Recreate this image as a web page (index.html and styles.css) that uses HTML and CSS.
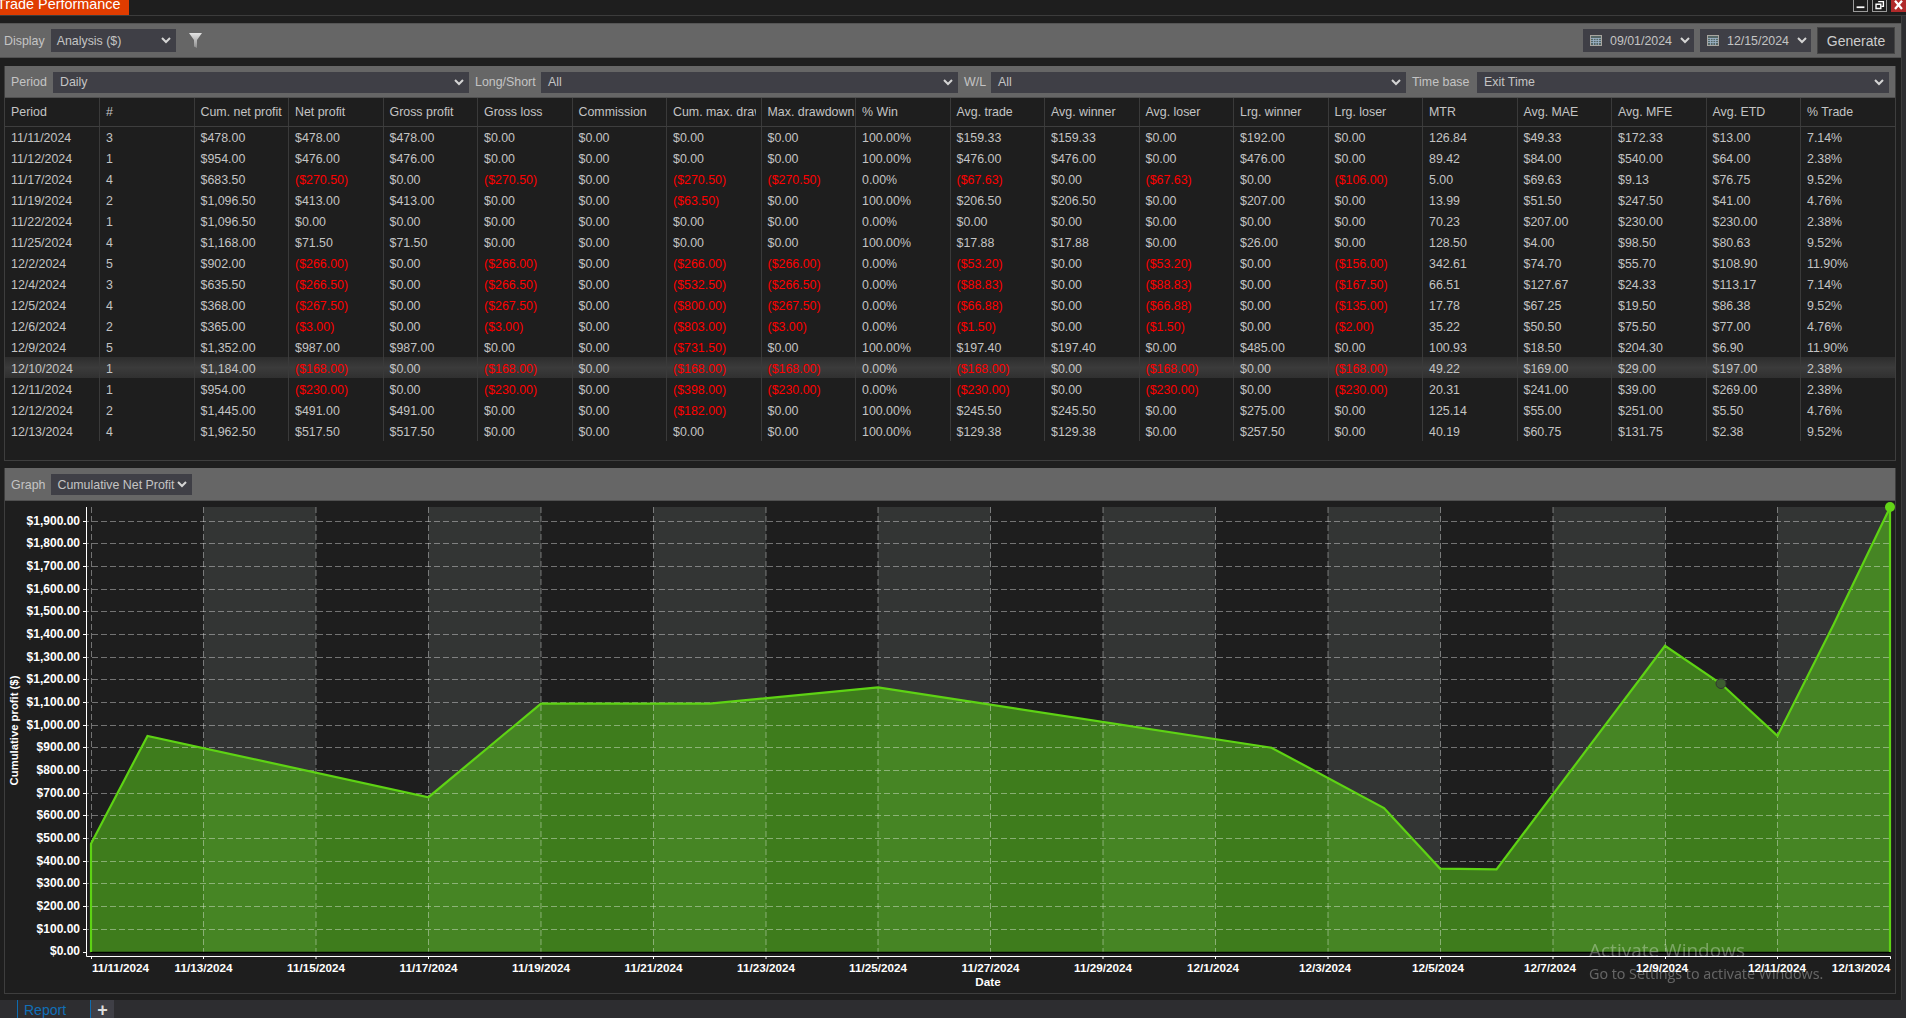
FILE: index.html
```html
<!DOCTYPE html>
<html lang="en">

<head>
    <meta charset="UTF-8">
    <meta name="viewport" content="width=device-width, initial-scale=1.0">
    <title>Trade Performance</title>
    <link rel="stylesheet" href="styles.css">
</head>

<body>
    <div class="titlebar">
        <div class="titleTab"><span>Trade Performance</span></div>
        <div class="winButtons">
            <div class="winBtn"><svg viewBox="0 0 15 11"><path d="M3 7.5h9" stroke="#fff" stroke-width="2"/></svg></div>
            <div class="winBtn"><svg viewBox="0 0 15 11"><path d="M6 1h6v5.5h-2M3.5 4h5.500v5h-5.500z" stroke="#fff" stroke-width="1.6" fill="none"/></svg></div>
            <div class="winBtn closeBtn"><svg viewBox="0 0 15 11"><path d="M3.5 0l8 9.5M11.5 0l-8 9.5" stroke="#fff" stroke-width="2.6"/></svg></div>
        </div>
    </div>

    <div class="workspace">
        <div class="toolbar">
            <span class="label">Display</span>
            <div class="select displaySelect">Analysis ($)<svg class="chev" viewBox="0 0 10 7"><path d="M1 1l4 4 4-4"/></svg></div>
            <svg class="funnel" viewBox="0 0 13 15">
                <defs><linearGradient id="funnelFill" x1="0" y1="0" x2="0" y2="1"><stop offset="0" stop-color="#e4e4e4"/><stop offset="1" stop-color="#8c8c8c"/></linearGradient></defs>
                <path d="M0 0h13l-5 7v8l-3-1.5v-6.5z" fill="url(#funnelFill)"/>
            </svg>
            <div class="toolbarRight">
                <div class="select dateSelect">
                    <svg class="calendar" viewBox="0 0 12 11"><rect x="0.5" y="0.5" width="11" height="10" fill="#566" stroke="#a9a6a0"/><path d="M1 3.5h10M1 5.5h10M1 7.5h10M3.5 3v7M6 3v7M8.5 3v7" stroke="#9db4c8" stroke-width="0.8"/></svg>
                    09/01/2024<svg class="chev" viewBox="0 0 10 7"><path d="M1 1l4 4 4-4"/></svg>
                </div>
                <div class="select dateSelect">
                    <svg class="calendar" viewBox="0 0 12 11"><rect x="0.5" y="0.5" width="11" height="10" fill="#566" stroke="#a9a6a0"/><path d="M1 3.5h10M1 5.5h10M1 7.5h10M3.5 3v7M6 3v7M8.5 3v7" stroke="#9db4c8" stroke-width="0.8"/></svg>
                    12/15/2024<svg class="chev" viewBox="0 0 10 7"><path d="M1 1l4 4 4-4"/></svg>
                </div>
                <button class="generate">Generate</button>
            </div>
        </div>

        <div class="panel tablePanel">
            <div class="panelHead filters">
                <span class="label">Period</span>
                <div class="select">Daily<svg class="chev" viewBox="0 0 10 7"><path d="M1 1l4 4 4-4"/></svg></div>
                <span class="label">Long/Short</span>
                <div class="select">All<svg class="chev" viewBox="0 0 10 7"><path d="M1 1l4 4 4-4"/></svg></div>
                <span class="label">W/L</span>
                <div class="select">All<svg class="chev" viewBox="0 0 10 7"><path d="M1 1l4 4 4-4"/></svg></div>
                <span class="label">Time base</span>
                <div class="select">Exit Time<svg class="chev" viewBox="0 0 10 7"><path d="M1 1l4 4 4-4"/></svg></div>
            </div>
            <table class="perf">
                <thead>
                    <tr><th>Period</th><th>#</th><th>Cum. net profit</th><th>Net profit</th><th>Gross profit</th><th>Gross loss</th><th>Commission</th><th><span class="cut">Cum. max. drawdown</span></th><th>Max. drawdown</th><th>% Win</th><th>Avg. trade</th><th>Avg. winner</th><th>Avg. loser</th><th>Lrg. winner</th><th>Lrg. loser</th><th>MTR</th><th>Avg. MAE</th><th>Avg. MFE</th><th>Avg. ETD</th><th>% Trade</th></tr>
                </thead>
                <tbody>
                    <tr><td>11/11/2024</td><td>3</td><td>$478.00</td><td>$478.00</td><td>$478.00</td><td>$0.00</td><td>$0.00</td><td>$0.00</td><td>$0.00</td><td>100.00%</td><td>$159.33</td><td>$159.33</td><td>$0.00</td><td>$192.00</td><td>$0.00</td><td>126.84</td><td>$49.33</td><td>$172.33</td><td>$13.00</td><td>7.14%</td></tr>
                    <tr><td>11/12/2024</td><td>1</td><td>$954.00</td><td>$476.00</td><td>$476.00</td><td>$0.00</td><td>$0.00</td><td>$0.00</td><td>$0.00</td><td>100.00%</td><td>$476.00</td><td>$476.00</td><td>$0.00</td><td>$476.00</td><td>$0.00</td><td>89.42</td><td>$84.00</td><td>$540.00</td><td>$64.00</td><td>2.38%</td></tr>
                    <tr><td>11/17/2024</td><td>4</td><td>$683.50</td><td class="neg">($270.50)</td><td>$0.00</td><td class="neg">($270.50)</td><td>$0.00</td><td class="neg">($270.50)</td><td class="neg">($270.50)</td><td>0.00%</td><td class="neg">($67.63)</td><td>$0.00</td><td class="neg">($67.63)</td><td>$0.00</td><td class="neg">($106.00)</td><td>5.00</td><td>$69.63</td><td>$9.13</td><td>$76.75</td><td>9.52%</td></tr>
                    <tr><td>11/19/2024</td><td>2</td><td>$1,096.50</td><td>$413.00</td><td>$413.00</td><td>$0.00</td><td>$0.00</td><td class="neg">($63.50)</td><td>$0.00</td><td>100.00%</td><td>$206.50</td><td>$206.50</td><td>$0.00</td><td>$207.00</td><td>$0.00</td><td>13.99</td><td>$51.50</td><td>$247.50</td><td>$41.00</td><td>4.76%</td></tr>
                    <tr><td>11/22/2024</td><td>1</td><td>$1,096.50</td><td>$0.00</td><td>$0.00</td><td>$0.00</td><td>$0.00</td><td>$0.00</td><td>$0.00</td><td>0.00%</td><td>$0.00</td><td>$0.00</td><td>$0.00</td><td>$0.00</td><td>$0.00</td><td>70.23</td><td>$207.00</td><td>$230.00</td><td>$230.00</td><td>2.38%</td></tr>
                    <tr><td>11/25/2024</td><td>4</td><td>$1,168.00</td><td>$71.50</td><td>$71.50</td><td>$0.00</td><td>$0.00</td><td>$0.00</td><td>$0.00</td><td>100.00%</td><td>$17.88</td><td>$17.88</td><td>$0.00</td><td>$26.00</td><td>$0.00</td><td>128.50</td><td>$4.00</td><td>$98.50</td><td>$80.63</td><td>9.52%</td></tr>
                    <tr><td>12/2/2024</td><td>5</td><td>$902.00</td><td class="neg">($266.00)</td><td>$0.00</td><td class="neg">($266.00)</td><td>$0.00</td><td class="neg">($266.00)</td><td class="neg">($266.00)</td><td>0.00%</td><td class="neg">($53.20)</td><td>$0.00</td><td class="neg">($53.20)</td><td>$0.00</td><td class="neg">($156.00)</td><td>342.61</td><td>$74.70</td><td>$55.70</td><td>$108.90</td><td>11.90%</td></tr>
                    <tr><td>12/4/2024</td><td>3</td><td>$635.50</td><td class="neg">($266.50)</td><td>$0.00</td><td class="neg">($266.50)</td><td>$0.00</td><td class="neg">($532.50)</td><td class="neg">($266.50)</td><td>0.00%</td><td class="neg">($88.83)</td><td>$0.00</td><td class="neg">($88.83)</td><td>$0.00</td><td class="neg">($167.50)</td><td>66.51</td><td>$127.67</td><td>$24.33</td><td>$113.17</td><td>7.14%</td></tr>
                    <tr><td>12/5/2024</td><td>4</td><td>$368.00</td><td class="neg">($267.50)</td><td>$0.00</td><td class="neg">($267.50)</td><td>$0.00</td><td class="neg">($800.00)</td><td class="neg">($267.50)</td><td>0.00%</td><td class="neg">($66.88)</td><td>$0.00</td><td class="neg">($66.88)</td><td>$0.00</td><td class="neg">($135.00)</td><td>17.78</td><td>$67.25</td><td>$19.50</td><td>$86.38</td><td>9.52%</td></tr>
                    <tr><td>12/6/2024</td><td>2</td><td>$365.00</td><td class="neg">($3.00)</td><td>$0.00</td><td class="neg">($3.00)</td><td>$0.00</td><td class="neg">($803.00)</td><td class="neg">($3.00)</td><td>0.00%</td><td class="neg">($1.50)</td><td>$0.00</td><td class="neg">($1.50)</td><td>$0.00</td><td class="neg">($2.00)</td><td>35.22</td><td>$50.50</td><td>$75.50</td><td>$77.00</td><td>4.76%</td></tr>
                    <tr><td>12/9/2024</td><td>5</td><td>$1,352.00</td><td>$987.00</td><td>$987.00</td><td>$0.00</td><td>$0.00</td><td class="neg">($731.50)</td><td>$0.00</td><td>100.00%</td><td>$197.40</td><td>$197.40</td><td>$0.00</td><td>$485.00</td><td>$0.00</td><td>100.93</td><td>$18.50</td><td>$204.30</td><td>$6.90</td><td>11.90%</td></tr>
                    <tr class="selected"><td>12/10/2024</td><td>1</td><td>$1,184.00</td><td class="neg">($168.00)</td><td>$0.00</td><td class="neg">($168.00)</td><td>$0.00</td><td class="neg">($168.00)</td><td class="neg">($168.00)</td><td>0.00%</td><td class="neg">($168.00)</td><td>$0.00</td><td class="neg">($168.00)</td><td>$0.00</td><td class="neg">($168.00)</td><td>49.22</td><td>$169.00</td><td>$29.00</td><td>$197.00</td><td>2.38%</td></tr>
                    <tr><td>12/11/2024</td><td>1</td><td>$954.00</td><td class="neg">($230.00)</td><td>$0.00</td><td class="neg">($230.00)</td><td>$0.00</td><td class="neg">($398.00)</td><td class="neg">($230.00)</td><td>0.00%</td><td class="neg">($230.00)</td><td>$0.00</td><td class="neg">($230.00)</td><td>$0.00</td><td class="neg">($230.00)</td><td>20.31</td><td>$241.00</td><td>$39.00</td><td>$269.00</td><td>2.38%</td></tr>
                    <tr><td>12/12/2024</td><td>2</td><td>$1,445.00</td><td>$491.00</td><td>$491.00</td><td>$0.00</td><td>$0.00</td><td class="neg">($182.00)</td><td>$0.00</td><td>100.00%</td><td>$245.50</td><td>$245.50</td><td>$0.00</td><td>$275.00</td><td>$0.00</td><td>125.14</td><td>$55.00</td><td>$251.00</td><td>$5.50</td><td>4.76%</td></tr>
                    <tr><td>12/13/2024</td><td>4</td><td>$1,962.50</td><td>$517.50</td><td>$517.50</td><td>$0.00</td><td>$0.00</td><td>$0.00</td><td>$0.00</td><td>100.00%</td><td>$129.38</td><td>$129.38</td><td>$0.00</td><td>$257.50</td><td>$0.00</td><td>40.19</td><td>$60.75</td><td>$131.75</td><td>$2.38</td><td>9.52%</td></tr>
                </tbody>
            </table>
        </div>

        <div class="panel graphPanel">
            <div class="panelHead graphHead">
                <span class="label">Graph</span>
                <div class="select graphSelect">Cumulative Net Profit<svg class="chev" viewBox="0 0 10 7"><path d="M1 1l4 4 4-4"/></svg></div>
            </div>
            <svg class="chart" width="1890" height="492" viewBox="5 501 1890 492">
                <!-- shaded date bands -->
                <g class="bands">
                    <rect x="203.5" y="507" width="112.5" height="445"/>
                    <rect x="428.5" y="507" width="112.5" height="445"/>
                    <rect x="653.5" y="507" width="112.5" height="445"/>
                    <rect x="878" y="507" width="112.5" height="445"/>
                    <rect x="1103" y="507" width="112.5" height="445"/>
                    <rect x="1328" y="507" width="112.5" height="445"/>
                    <rect x="1553" y="507" width="112.5" height="445"/>
                    <rect x="1777.5" y="507" width="112.5" height="445"/>
                </g>
                <polygon class="area" points="91,952 91,843.7 147.5,735.9 428.5,797.2 541,703.6 709.5,703.6 878,687.4 1271.5,747.7 1384,808.1 1440,868.6 1496.5,869.3 1665,645.8 1721,683.8 1777.5,735.9 1833.5,624.7 1890,507.5 1890,952"/>
                <!-- dashed grid -->
                <path class="grid" d="M83 521.5H1890M83 543.5H1890M83 566.5H1890M83 589.5H1890M83 611.5H1890M83 634.5H1890M83 657.5H1890M83 679.5H1890M83 702.5H1890M83 725.5H1890M83 747.5H1890M83 770.5H1890M83 793.5H1890M83 815.5H1890M83 838.5H1890M83 861.5H1890M83 883.5H1890M83 906.5H1890M83 929.5H1890"/>
                <path class="grid" d="M91.5 507V952M203.5 507V952M316 507V952M428.5 507V952M541 507V952M653.5 507V952M766 507V952M878 507V952M990.5 507V952M1103 507V952M1215.5 507V952M1328 507V952M1440.5 507V952M1553 507V952M1665.5 507V952M1777.5 507V952"/>
                <path class="baseline" d="M91 952.5H1890"/>
                <polyline class="profit" points="91,952 91,843.7 147.5,735.9 428.5,797.2 541,703.6 709.5,703.6 878,687.4 1271.5,747.7 1384,808.1 1440,868.6 1496.5,869.3 1665,645.8 1721,683.8 1777.5,735.9 1833.5,624.7 1890,507.5 1890,952"/>
                <circle class="endDot" cx="1890" cy="507" r="5"/>
                <circle class="hoverDot" cx="1721" cy="683.5" r="5"/>
                <!-- axes -->
                <path class="axis" d="M86.5 507V956.5H1890.5V959M91.5 956.5V959M203.5 956.5V959M316 956.5V959M428.5 956.5V959M541 956.5V959M653.5 956.5V959M766 956.5V959M878 956.5V959M990.5 956.5V959M1103 956.5V959M1215.5 956.5V959M1328 956.5V959M1440.5 956.5V959M1553 956.5V959M1665.5 956.5V959M1777.5 956.5V959"/>
                <path class="axis" d="M83 521.5H86M83 543.5H86M83 566.5H86M83 589.5H86M83 611.5H86M83 634.5H86M83 657.5H86M83 679.5H86M83 702.5H86M83 725.5H86M83 747.5H86M83 770.5H86M83 793.5H86M83 815.5H86M83 838.5H86M83 861.5H86M83 883.5H86M83 906.5H86M83 929.5H86M83 952.5H86"/>
                <g class="yLabels">
                    <text x="80" y="524.5">$1,900.00</text>
                    <text x="80" y="546.5">$1,800.00</text>
                    <text x="80" y="569.5">$1,700.00</text>
                    <text x="80" y="592.5">$1,600.00</text>
                    <text x="80" y="614.5">$1,500.00</text>
                    <text x="80" y="637.5">$1,400.00</text>
                    <text x="80" y="660.5">$1,300.00</text>
                    <text x="80" y="682.5">$1,200.00</text>
                    <text x="80" y="705.5">$1,100.00</text>
                    <text x="80" y="728.5">$1,000.00</text>
                    <text x="80" y="750.5">$900.00</text>
                    <text x="80" y="773.5">$800.00</text>
                    <text x="80" y="796.5">$700.00</text>
                    <text x="80" y="818.5">$600.00</text>
                    <text x="80" y="841.5">$500.00</text>
                    <text x="80" y="864.5">$400.00</text>
                    <text x="80" y="886.5">$300.00</text>
                    <text x="80" y="909.5">$200.00</text>
                    <text x="80" y="932.5">$100.00</text>
                    <text x="80" y="955">$0.00</text>
                </g>
                <g class="xLabels">
                    <text x="120.5" y="972">11/11/2024</text>
                    <text x="203.5" y="972">11/13/2024</text>
                    <text x="316" y="972">11/15/2024</text>
                    <text x="428.5" y="972">11/17/2024</text>
                    <text x="541" y="972">11/19/2024</text>
                    <text x="653.5" y="972">11/21/2024</text>
                    <text x="766" y="972">11/23/2024</text>
                    <text x="878" y="972">11/25/2024</text>
                    <text x="990.5" y="972">11/27/2024</text>
                    <text x="1103" y="972">11/29/2024</text>
                    <text x="1213" y="972">12/1/2024</text>
                    <text x="1325" y="972">12/3/2024</text>
                    <text x="1438" y="972">12/5/2024</text>
                    <text x="1550" y="972">12/7/2024</text>
                    <text x="1662" y="972">12/9/2024</text>
                    <text x="1777" y="972">12/11/2024</text>
                    <text x="1861" y="972">12/13/2024</text>
                    <text x="988" y="986">Date</text>
                </g>
                <text class="yTitle" transform="translate(18 730.5) rotate(-90)">Cumulative profit ($)</text>
            </svg>
        </div>
    </div>

    <div class="tabBar">
        <div class="tab">Report</div>
        <div class="addTab">+</div>
    </div>

    <div class="watermark">
        <div class="wmTitle">Activate Windows</div>
        <div class="wmText">Go to Settings to activate Windows.</div>
    </div>
</body>

</html>
```

FILE: styles.css
```css
* {
    margin: 0;
    padding: 0;
    box-sizing: border-box;
}

body {
    width: 1906px;
    height: 1018px;
    overflow: hidden;
    background: #2d2d30;
    font-family: "Liberation Sans", Arial, sans-serif;
    font-size: 12.4px;
    color: #c4c4c4;
}

/* Title strip */
.titlebar {
    display: flex;
    justify-content: space-between;
    height: 16px;
    background: #1e1e1e;
    border-bottom: 1px solid #3c3c3c;
}

.titleTab {
    width: 129px;
    height: 15px;
    background: #e03c00;
    color: #fff;
    font-size: 14.4px;
    line-height: 8px;
    overflow: hidden;
}

.titleTab span {
    display: block;
    margin-left: -3px;
    white-space: nowrap;
}

.winButtons {
    display: flex;
    gap: 4px;
}

.winBtn {
    width: 15px;
    height: 12px;
    border: 1px solid #9a9a9a;
    border-top: none;
}

.winBtn svg {
    display: block;
    width: 100%;
    height: 100%;
}

.closeBtn {
    background: #b02a2a;
    border-color: #b02a2a;
}

/* Main area */
.workspace {
    width: 1902px;
    height: 984px;
    background: #1e1e1e;
    border-right: 1px solid #3c3c3c;
    padding-top: 7px;
}

.toolbar {
    display: flex;
    align-items: center;
    height: 35px;
    padding: 0 6px 0 4px;
    background: #666;
    border-top: 1px solid #555;
    border-bottom: 1px solid #505050;
}

.toolbarRight {
    display: flex;
    align-items: center;
    gap: 6px;
    margin-left: auto;
}

.label {
    flex: none;
    white-space: nowrap;
}

.toolbar > .label {
    margin-right: 6px;
}

.select {
    display: flex;
    align-items: center;
    justify-content: space-between;
    height: 21px;
    padding: 0 5px 0 7px;
    background: #3f3f46;
    white-space: nowrap;
}

.chev {
    flex: none;
    width: 10px;
    height: 7px;
    fill: none;
    stroke: #d4d4d4;
    stroke-width: 2;
}

.displaySelect {
    width: 125px;
    height: 23px;
    padding-left: 6px;
}

.funnel {
    width: 13px;
    height: 15px;
    margin-left: 13px;
}

.dateSelect {
    width: 111px;
    height: 23px;
    padding-right: 4px;
}

.calendar {
    flex: none;
    width: 12px;
    height: 11px;
}

.generate {
    width: 78px;
    height: 27px;
    background: #2d2d30;
    border: 1px solid #444;
    color: #ccc;
    font-family: "Liberation Sans", Arial, sans-serif;
    font-size: 14px;
}

/* Panels */
.panel {
    width: 1892px;
    margin-left: 4px;
    border: 1px solid #3e3e3e;
    border-top: none;
}

.tablePanel {
    height: 395px;
    margin-top: 8px;
}

.graphPanel {
    height: 526px;
    margin-top: 7px;
}

.panelHead {
    display: flex;
    align-items: center;
    gap: 6px;
    height: 32px;
    padding: 1px 6px 0;
    background: #666;
    border-bottom: 1px solid #505050;
}

.graphHead {
    height: 33px;
}

.graphSelect {
    width: 141px;
    padding-left: 6px;
}

/* filter row, widths read off the screenshot */
.filters .label:nth-child(1) { width: 36px; }
.filters .label:nth-child(3) { width: 60px; }
.filters .label:nth-child(5) { width: 21px; }
.filters .label:nth-child(7) { width: 59px; }
.filters .select:nth-child(2) { width: 416px; }
.filters .select:nth-child(4) { width: 417px; }
.filters .select:nth-child(6) { width: 415px; }
.filters .select:nth-child(8) { flex: 1; }

/* Table */
.perf {
    width: 1890px;
    table-layout: fixed;
    border-collapse: collapse;
}

.perf th {
    height: 28px;
    padding: 1px 0 0 6px;
    font-weight: normal;
    text-align: left;
    white-space: nowrap;
    overflow: hidden;
    border-right: 1px solid #3a3a3a;
    border-bottom: 1px solid #3e3e3e;
}

.cut {
    display: block;
    overflow: hidden;
    width: 83px;
}

.perf td {
    height: 21px;
    padding: 2px 0 0 6px;
    white-space: nowrap;
    border-right: 1px solid #3a3a3a;
}

.perf th:last-child, .perf td:last-child {
    border-right: none;
}

.perf .neg {
    color: #f00;
}

.selected {
    background: linear-gradient(#2d2d2d, #3b3b3b 50%, #303030);
}

/* Chart */
.chart {
    display: block;
}

.bands rect {
    fill: #333534;
}

.area {
    fill: rgba(82, 183, 27, 0.62);
}

.grid {
    fill: none;
    stroke: rgba(255, 255, 255, 0.38);
    stroke-width: 1;
    stroke-dasharray: 6 3;
}

.baseline {
    stroke: #000;
    stroke-width: 1.5;
}

.profit {
    fill: none;
    stroke: #5ed314;
    stroke-width: 2.2;
}

.endDot {
    fill: #62d417;
}

.hoverDot {
    fill: #3c5c30;
    stroke: #333;
    stroke-width: 1;
}

.axis {
    fill: none;
    stroke: #fff;
    stroke-width: 1;
}

.yLabels text, .xLabels text, .yTitle {
    fill: #fff;
    font-family: "Liberation Sans", Arial, sans-serif;
    font-weight: bold;
}

.yLabels text {
    font-size: 12px;
    text-anchor: end;
}

.xLabels text {
    font-size: 11.7px;
    text-anchor: middle;
}

.yTitle {
    font-size: 11.3px;
    text-anchor: middle;
}

/* Bottom tabs */
.tabBar {
    display: flex;
    height: 18px;
    padding-left: 17px;
}

.tab {
    width: 74px;
    padding-left: 6px;
    border-left: 1px solid #0e6cb0;
    border-right: 1px solid #0e6cb0;
    color: #1170b8;
    font-size: 14px;
    line-height: 21px;
    overflow: hidden;
}

.addTab {
    width: 23px;
    background: #3f3f46;
    color: #ddd;
    font-size: 18px;
    font-weight: bold;
    line-height: 20px;
    text-align: center;
}

/* Windows watermark, sits over everything */
.watermark {
    position: fixed;
    left: 1589px;
    top: 936px;
    color: rgba(255, 255, 255, 0.32);
    font-family: "Open Sans", sans-serif;
    white-space: nowrap;
}

.wmTitle {
    font-size: 19px;
    line-height: 28px;
}

.wmText {
    font-size: 14.3px;
    line-height: 20px;
}
```
